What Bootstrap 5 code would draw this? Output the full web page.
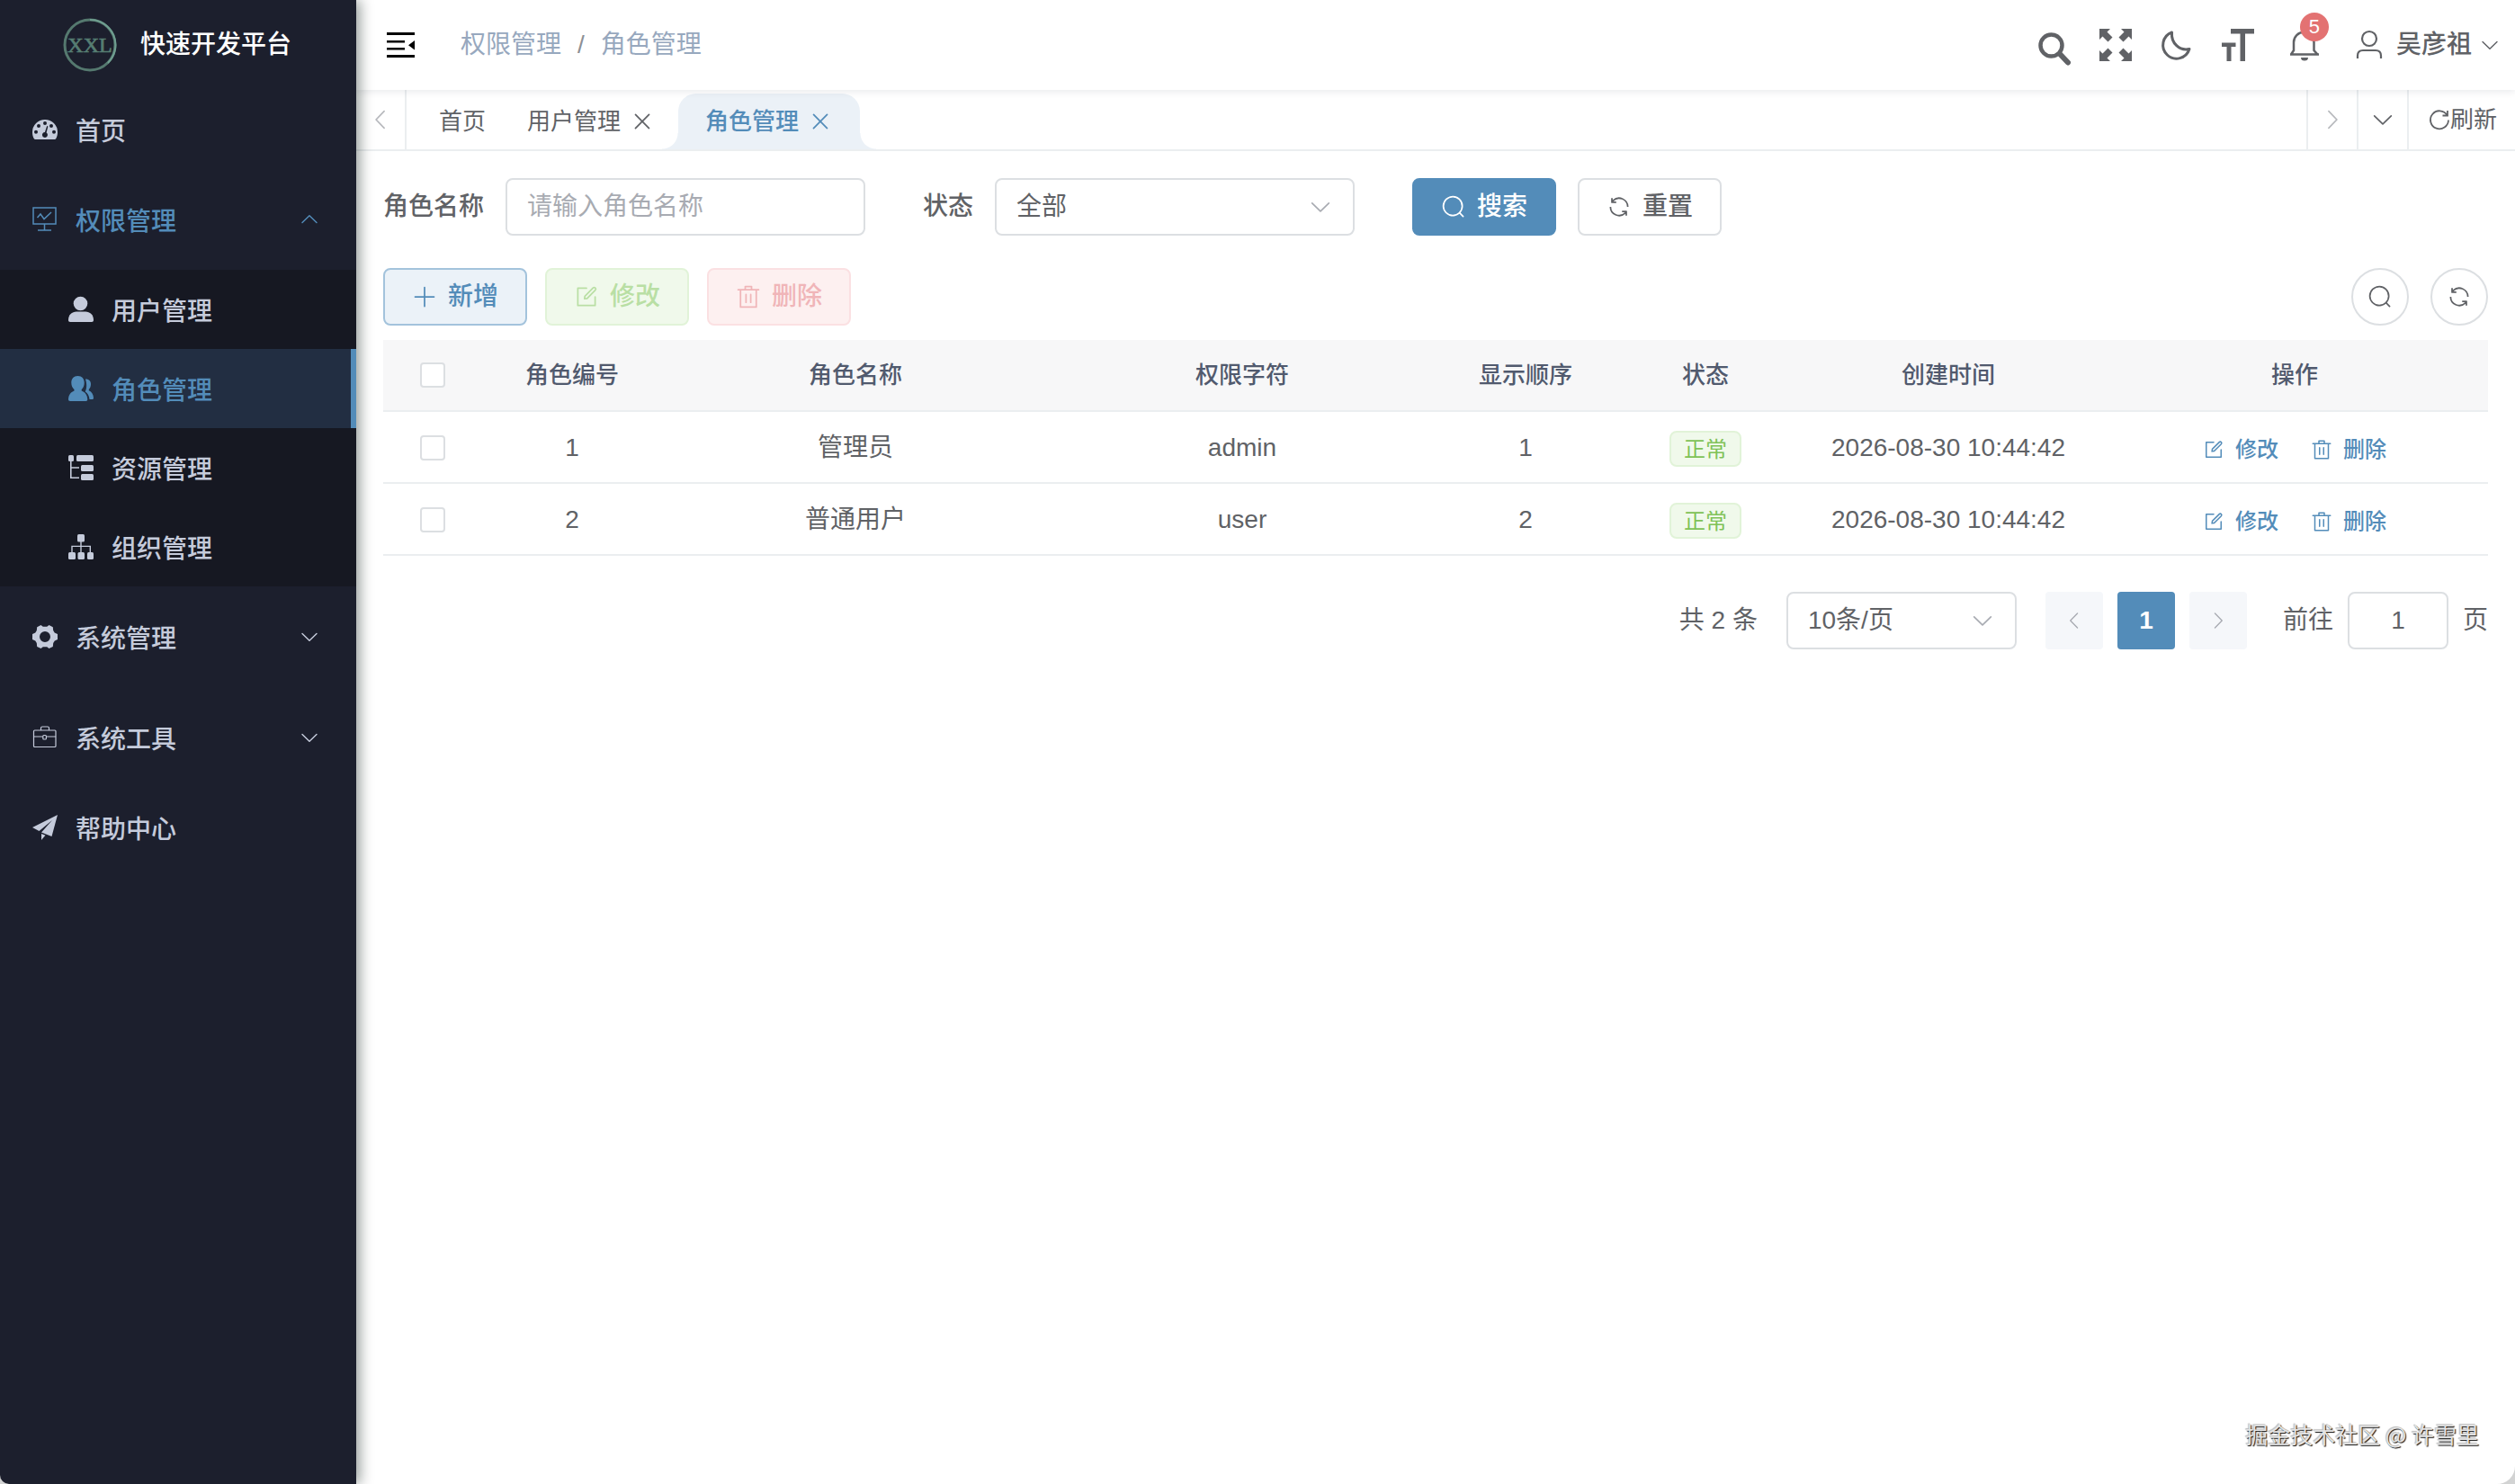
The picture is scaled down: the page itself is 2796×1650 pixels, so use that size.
<!DOCTYPE html>
<html lang="zh-CN">
<head>
<meta charset="utf-8">
<meta name="viewport" content="width=device-width, initial-scale=1">
<title>角色管理 - 快速开发平台</title>
<link rel="stylesheet" href="https://cdn.jsdelivr.net/npm/bootstrap@5.3.0/dist/css/bootstrap.min.css">
<style>
:root{--brand:#538cb9;--ink:#606266;--line:#ebeef0;--ctl:#dcdfe2}
body{font-family:"Liberation Sans","Noto Sans CJK SC",sans-serif;font-size:28px;line-height:40px;color:var(--ink);background:#d2d3d3}
a{text-decoration:none;color:inherit}
button{color:inherit}
.ico{width:28px;height:28px;fill:currentColor;flex:none;display:block;overflow:visible}
.ico.line{fill:none;stroke:currentColor}
.ico-sm{width:24px;height:24px}
.ico-lg{width:36px;height:36px}
.shell{min-height:100vh;background:#fff;border-radius:0 0 20px 10px;overflow:hidden;position:relative}
/* sidebar */
.side{width:396px;flex:none;background:#1c1f2d;color:#c5cbdb;font-weight:500;box-shadow:4px 0 14px rgba(0,20,15,.42);z-index:2}
.logo-row{height:100px;padding-left:70px;gap:26px;color:#fff}
.logo-row svg{width:60px;height:60px}
.menu-a{height:88px;padding:0 36px;gap:20px;font-family:"Noto Sans CJK SC",sans-serif}
.menu-a.tall{height:112px}
.menu-a.on{color:var(--brand)}
.menu-a .ico-sm{margin-left:auto;margin-right:4px}
.sub{background:#161822}
.sub .menu-a{padding-left:76px}
.sub .menu-a.on{background:#222e42;border-right:6px solid var(--brand)}
/* top bar */
.topbar{height:100px;padding:0 16px 0 34px;position:relative;z-index:1;box-shadow:0 2px 8px rgba(0,21,41,.09)}
.crumb{gap:18px;margin-left:46px;color:#97a8be}
.crumb i{font-style:normal;color:#8d9095}
.tools{gap:32px}
.tool{border:0;background:none;padding:0;display:block}
.bell{position:relative;margin-left:6px}
.bell b{position:absolute;left:13px;top:-18px;width:32px;height:32px;border-radius:16px;background:#e37272;color:#fff;font-size:22px;line-height:32px;font-weight:400;text-align:center}
.who{font-weight:500;gap:12px;margin-left:4px}
.who .ico-sm{margin-left:-4px}
/* tab bar */
.tabbar{height:68px;border-bottom:2px solid var(--line);font-size:26px}
.cellbtn{width:56px;border:0;background:none;padding:0;display:flex;align-items:center;justify-content:center;color:var(--ink)}
.cellbtn.dim{color:#b5b7bb}
.bl{border-left:2px solid var(--line)}
.br{border-right:2px solid var(--line)}
.tablist{padding-left:10px}
.tab-i{padding:0 26px;height:62px;margin-top:4px;gap:10px;position:relative}
.tab-i.home{margin-right:20px;padding-right:0}
.tab-i.on{padding:0 30px;background:#ebf1f7;color:var(--brand);font-weight:500;border-radius:20px 20px 0 0}
.tab-i.on::before,.tab-i.on::after{content:"";position:absolute;bottom:0;width:18px;height:18px}
.tab-i.on::before{left:-18px;background:radial-gradient(circle at 0 0,transparent 17px,#ebf1f7 18px)}
.tab-i.on::after{right:-18px;background:radial-gradient(circle at 100% 0,transparent 17px,#ebf1f7 18px)}
.reload{padding:0 20px 0 22px}
/* content */
.page{padding:30px 30px 0}
.lab{font-weight:500;padding-right:24px}
.gap-l{margin-left:64px}
.gap-s{margin-left:24px}
.ctl{height:64px;border:2px solid var(--ctl);border-radius:8px;background:#fff;color:var(--ink);padding:0 22px;font-size:28px;line-height:40px;width:100%;appearance:none;outline:0;display:block}
.ctl::placeholder{color:#a8abb2;opacity:1}
.pick{position:relative}
.pick .ico{position:absolute;right:24px;top:18px;color:#a8abb2;pointer-events:none}
.w-ctl{width:400px}
.w-size{width:256px}
.w-go{width:112px}
.b-el{height:64px;width:160px;padding:0;border:2px solid var(--ctl);border-radius:8px;display:flex;align-items:center;justify-content:center;gap:12px;font-size:28px;line-height:40px;font-weight:500;color:var(--ink);background:#fff}
.b-main{background:var(--brand);border-color:var(--brand);color:#fff}
.b-add{background:#ebf2f8;border-color:#a3c3dc;color:var(--brand)}
.b-edit{background:#f0f9eb;border-color:#e1f3d8;color:#b9dfa4}
.b-del{background:#fdf0f0;border-color:#fbe0e2;color:#f0b5b8}
.b-round{width:64px;border-radius:32px}
.acts{gap:20px;margin:36px 0 16px}
.grid-t{table-layout:fixed;width:100%;text-align:center;border-collapse:separate;border-spacing:0}
.grid-t th,.grid-t td{height:80px;padding:0;border-bottom:2px solid var(--line);vertical-align:middle}
.grid-t td{padding-top:2px}
.grid-t th{background:#f7f7f8;color:#515a6e;font-size:26px;font-weight:500}
.c-tick{width:110px}
.c-mid{width:200px}
.c-time{width:340px}
.tick{appearance:none;width:28px;height:28px;border:2px solid var(--ctl);border-radius:4px;background:#fff;display:block;margin:0 auto}
.state{display:block;width:80px;height:40px;line-height:38px;margin:2px auto 0;border:2px solid #e1f3d8;background:#f0f9eb;color:#7fc257;border-radius:8px;font-size:24px}
.ops{font-size:24px;color:var(--brand);font-weight:500;gap:36px;padding-top:4px}
.ops a{gap:12px}
.pager{gap:16px;margin-top:40px}
.pg{width:64px;height:64px;border:0;border-radius:4px;background:#f5f7fa;color:#a8abb2;display:flex;align-items:center;justify-content:center;padding:0}
.pg.on{background:var(--brand);color:#fff;font-weight:700}
.stamp{position:absolute;right:40px;bottom:36px;font-family:"Noto Sans CJK SC",sans-serif;font-size:25px;line-height:40px;color:#e4e4e4;text-shadow:1px 1px 1px #111,-1px -1px 1px #bbb}
</style>
</head>
<body>
<svg class="d-none" xmlns="http://www.w3.org/2000/svg">
<symbol id="down" viewBox="0 0 1024 1024"><path d="M831.872 340.864 512 652.672 192.128 340.864a30.592 30.592 0 0 0-42.752 0 29.12 29.12 0 0 0 0 41.6L489.664 714.24a32 32 0 0 0 44.672 0l340.288-331.712a29.12 29.12 0 0 0 0-41.728 30.592 30.592 0 0 0-42.752 0z"/></symbol>
<symbol id="up" viewBox="0 0 1024 1024"><path transform="rotate(180 512 512)" d="M831.872 340.864 512 652.672 192.128 340.864a30.592 30.592 0 0 0-42.752 0 29.12 29.12 0 0 0 0 41.6L489.664 714.24a32 32 0 0 0 44.672 0l340.288-331.712a29.12 29.12 0 0 0 0-41.728 30.592 30.592 0 0 0-42.752 0z"/></symbol>
<symbol id="left" viewBox="0 0 1024 1024"><path transform="rotate(90 512 512)" d="M831.872 340.864 512 652.672 192.128 340.864a30.592 30.592 0 0 0-42.752 0 29.12 29.12 0 0 0 0 41.6L489.664 714.24a32 32 0 0 0 44.672 0l340.288-331.712a29.12 29.12 0 0 0 0-41.728 30.592 30.592 0 0 0-42.752 0z"/></symbol>
<symbol id="right" viewBox="0 0 1024 1024"><path transform="rotate(-90 512 512)" d="M831.872 340.864 512 652.672 192.128 340.864a30.592 30.592 0 0 0-42.752 0 29.12 29.12 0 0 0 0 41.6L489.664 714.24a32 32 0 0 0 44.672 0l340.288-331.712a29.12 29.12 0 0 0 0-41.728 30.592 30.592 0 0 0-42.752 0z"/></symbol>
<symbol id="find" viewBox="0 0 1024 1024"><path d="m795.904 750.72 124.992 124.928a32 32 0 0 1-45.248 45.248L750.656 795.904a416 416 0 1 1 45.248-45.248zM480 832a352 352 0 1 0 0-704 352 352 0 0 0 0 704z"/></symbol>
<symbol id="sync" viewBox="0 0 1024 1024"><path d="M771.776 794.88A384 384 0 0 1 128 512h64a320 320 0 0 0 555.712 216.448H654.72a32 32 0 1 1 0-64h149.056a32 32 0 0 1 32 32v148.928a32 32 0 1 1-64 0v-50.56zM276.288 295.616h92.992a32 32 0 0 1 0 64H220.16a32 32 0 0 1-32-32V178.56a32 32 0 0 1 64 0v50.56A384 384 0 0 1 896.128 512h-64a320 320 0 0 0-555.776-216.384z"/></symbol>
<symbol id="plus" viewBox="0 0 1024 1024"><path d="M480 480V128a32 32 0 0 1 64 0v352h352a32 32 0 1 1 0 64H544v352a32 32 0 1 1-64 0V544H128a32 32 0 0 1 0-64h352z"/></symbol>
<symbol id="edit" viewBox="0 0 1024 1024"><path d="M832 512a32 32 0 1 1 64 0v352a32 32 0 0 1-32 32H160a32 32 0 0 1-32-32V160a32 32 0 0 1 32-32h352a32 32 0 0 1 0 64H192v640h640V512z"/><path d="m469.952 554.24 52.8-7.552L847.104 222.4a32 32 0 1 0-45.248-45.248L477.44 501.44l-7.552 52.8zm422.4-422.4a96 96 0 0 1 0 135.808l-331.84 331.84a32 32 0 0 1-18.112 9.088L436.8 623.68a32 32 0 0 1-36.224-36.224l15.104-105.6a32 32 0 0 1 9.024-18.112l331.904-331.84a96 96 0 0 1 135.744 0z"/></symbol>
<symbol id="bin" viewBox="0 0 1024 1024"><path d="M160 256H96a32 32 0 0 1 0-64h256V95.936a32 32 0 0 1 32-32h256a32 32 0 0 1 32 32V192h256a32 32 0 1 1 0 64h-64v672a32 32 0 0 1-32 32H192a32 32 0 0 1-32-32V256zm448-64v-64H416v64h192zM224 896h576V256H224v640zm192-128a32 32 0 0 1-32-32V416a32 32 0 0 1 64 0v320a32 32 0 0 1-32 32zm192 0a32 32 0 0 1-32-32V416a32 32 0 0 1 64 0v320a32 32 0 0 1-32 32z"/></symbol>
<symbol id="shut" viewBox="0 0 1024 1024"><path d="M764.288 214.592 512 466.88 259.712 214.592a31.936 31.936 0 0 0-45.12 45.12L466.752 512 214.528 764.224a31.936 31.936 0 1 0 45.12 45.184L512 557.184l252.288 252.288a31.936 31.936 0 0 0 45.12-45.12L557.12 512.064l252.288-252.352a31.936 31.936 0 1 0-45.12-45.184z"/></symbol>
</svg>
<div class="shell d-flex">
  <nav class="side" aria-label="主菜单">
    <div class="logo-row d-flex align-items-center">
      <svg viewBox="0 0 60 60" role="img" aria-label="XXL"><circle cx="30" cy="30" r="28" fill="none" stroke="#55796f" stroke-width="3"/><path d="M30 2a28 28 0 0 1 20 48" fill="none" stroke="#6f9e90" stroke-width="2"/><text x="30" y="38" text-anchor="middle" font-family="Liberation Serif" font-size="24" fill="#567d72" stroke="#567d72" stroke-width=".7">XXL</text></svg>
      <span>快速开发平台</span>
    </div>
    <a class="menu-a d-flex align-items-center" href="#"><svg class="ico" viewBox="0 0 28 28"><path fill-rule="evenodd" d="M14 3a14 14 0 0 0-14 14c0 2.600.5 5 1.800 7.300.3.500.8.700 1.400.700h21.600c.6 0 1.100-.2 1.400-.7C27.500 22 28 19.600 28 17A14 14 0 0 0 14 3zM4 14.800a2 2 0 1 1 0 4 2 2 0 0 1 0-4zM7 8a2 2 0 1 1 0 4 2 2 0 0 1 0-4zM14 5a2 2 0 1 1 0 4 2 2 0 0 1 0-4zM21 8a2 2 0 1 1 0 4 2 2 0 0 1 0-4zM24 14.800a2 2 0 1 1 0 4 2 2 0 0 1 0-4zM16.200 10l1.200.4-1.800 7a3 3 0 1 1-1.700-.5z"/></svg>首页</a>
    <a class="menu-a tall on d-flex align-items-center" href="#"><svg class="ico line" viewBox="0 0 28 28" stroke-width="1.500"><path d="M1 1h25v18H1zM13.500 19v7M6 26h15M5.500 12l3.500-4 4 5.500 8-7.500"/></svg>权限管理<svg class="ico ico-sm"><use href="#up"/></svg></a>
    <div class="sub">
      <a class="menu-a d-flex align-items-center" href="#"><svg class="ico" viewBox="0 0 28 28"><circle cx="13.500" cy="7.500" r="7.800"/><path d="M0 26c0-6 4-9.500 9-9.500h10c5 0 9 3.500 9 9.500 0 1.300-.8 2-2 2H2c-1.200 0-2-.7-2-2z"/></svg>用户管理</a>
      <a class="menu-a on d-flex align-items-center" href="#"><svg class="ico" viewBox="0 0 28 28"><path d="M10.500 0c4.500 0 7.200 3 7.200 7.500 0 3-1 5.700-3 7.500v1.500c4 1.500 6.300 4.500 6.600 9.500 0 1.300-.6 2-1.800 2H2c-1.300 0-2-.7-2-2 .3-5 2.500-8 6.500-9.500V15c-2.100-1.800-3.200-4.500-3.200-7.500C3.300 3 6 0 10.500 0z"/><path d="M19 3.500c4.500 0 6 2.500 6 5.500 0 2.500-.8 4.500-2.200 6v1.200c3.300 1.500 5 4.300 5.200 8.300 0 .8-.5 1.500-1.500 1.500h-3c-.5-4-1.800-6.500-4.800-8.500 1.600-3 2.200-8 .3-14z"/></svg>角色管理</a>
      <a class="menu-a d-flex align-items-center" href="#"><svg class="ico" viewBox="0 0 28 28"><rect width="6" height="7" rx="1.500"/><rect x="9" width="19" height="7" rx="1.500"/><rect x="14" y="11" width="14" height="7" rx="1.500"/><rect x="14" y="21" width="14" height="7" rx="1.500"/><path d="M2 6h1.600v7.200H12v1.600H3.600v9.600H12V26H2z"/></svg>资源管理</a>
      <a class="menu-a d-flex align-items-center" href="#"><svg class="ico" viewBox="0 0 28 28"><rect x="10" width="8" height="8.500" rx="1.500"/><rect y="20" width="8" height="8" rx="1.500"/><rect x="10.500" y="20" width="7.500" height="8" rx="1.500"/><rect x="21" y="20" width="7" height="8" rx="1.500"/><path d="M13.300 8h1.400v4.700H25V20h-1.400v-5.900h-8.900V20h-1.400v-5.900H4.700V20H3.300v-7.300h10z"/></svg>组织管理</a>
    </div>
    <a class="menu-a tall d-flex align-items-center" href="#"><svg class="ico" viewBox="0 0 28 28"><path fill-rule="evenodd" d="M9.500 1l2.300 1.700h4.400L18.500 1l4.300 2.300.4 3.700 1.500 2.500L28 11v6l-3.200 1.500-1.600 2.500-.4 4-4.300 2-2.300-1.700h-4.400L9.500 27l-4.300-2-.4-4-1.500-2.500L0 17v-6l3.300-1.500L4.800 7l.4-3.700zM14 8a6 6 0 1 0 0 12 6 6 0 0 0 0-12z"/></svg>系统管理<svg class="ico ico-sm"><use href="#down"/></svg></a>
    <a class="menu-a tall d-flex align-items-center" href="#"><svg class="ico line" viewBox="0 0 28 28" stroke-width="1.200"><rect x="1.500" y="6" width="24.500" height="18.500" rx="1"/><path d="M9.500 6V3.500q0-1.500 1.500-1.500h6q1.500 0 1.500 1.500V6M1.500 13h10M15.500 13H26"/><rect x="11.800" y="11.500" width="3.600" height="4.500" rx="1"/></svg>系统工具<svg class="ico ico-sm"><use href="#down"/></svg></a>
    <a class="menu-a d-flex align-items-center" href="#"><svg class="ico" viewBox="0 0 28 28"><path d="M28 0 0 14l7.500 4L22 6 10 19.500 21.500 24zM10 21v7l4.500-5.300z"/></svg>帮助中心</a>
  </nav>
  <div class="flex-grow-1 d-flex flex-column">
    <header class="topbar d-flex align-items-center">
      <button class="tool text-black" aria-label="折叠菜单"><svg class="ico ico-lg" viewBox="0 0 36 36"><path d="M0 4h31v3H0zM0 13h20v2.500H0zM0 21h20v2.500H0zM0 29h31v3H0zM31 13v10.500l-7-5.200z"/></svg></button>
      <div class="crumb d-flex"><a href="#">权限管理</a><i>/</i><span>角色管理</span></div>
      <div class="tools d-flex align-items-center ms-auto">
        <button class="tool" aria-label="搜索"><svg class="ico ico-lg line" viewBox="0 0 36 36" stroke-width="4.500"><circle cx="14.500" cy="18.500" r="12"/><path d="M24 28l9 9.500" stroke-linecap="round" stroke-width="6"/></svg></button>
        <button class="tool" aria-label="全屏"><svg class="ico ico-lg" viewBox="0 0 36 36"><path id="fs" d="M0 0h12L8.500 3.500l6 6-5 5-6-6L0 12z"/><use href="#fs" transform="matrix(-1 0 0 1 36 0)"/><use href="#fs" transform="matrix(1 0 0 -1 0 36)"/><use href="#fs" transform="matrix(-1 0 0 -1 36 36)"/></svg></button>
        <button class="tool" aria-label="深色模式"><svg class="ico ico-lg line" viewBox="0 0 36 36" stroke-width="3"><path d="M12.500 4A15 15 0 1 0 32 22.500C21 25 11.500 16 12.500 4z" stroke-linejoin="round"/></svg></button>
        <button class="tool" aria-label="字号"><svg class="ico ico-lg" viewBox="0 0 36 36"><path d="M10 0h26v5.500H26V36h-5.500V5.500H10zM0 15.500h15.500V20h-5v16h-5V20H0z"/></svg></button>
        <button class="tool bell" aria-label="通知"><svg class="ico ico-lg line" viewBox="0 0 36 36" stroke-width="2.500"><path d="M2 28.500h32M3 28.500l3-4.500V15a11 11 0 0 1 22.500 0v9l4 4.500"/><path d="M14 32h8a4 3.500 0 0 1-8 0z" fill="currentColor" stroke="none"/></svg><b>5</b></button>
        <a href="#" class="who d-flex align-items-center"><svg class="ico ico-lg line" viewBox="0 0 36 36" stroke-width="2.200"><circle cx="18" cy="11" r="8"/><path d="M5 33v-3q0-6 6-6h14q6 0 6 6v3"/></svg>吴彦祖<svg class="ico ico-sm"><use href="#down"/></svg></a>
      </div>
    </header>
    <div class="tabbar d-flex">
      <button class="cellbtn dim br" aria-label="向左"><svg class="ico"><use href="#left"/></svg></button>
      <div class="tablist d-flex">
        <a class="tab-i home d-flex align-items-center" href="#">首页</a>
        <a class="tab-i d-flex align-items-center" href="#">用户管理<svg class="ico"><use href="#shut"/></svg></a>
        <a class="tab-i on d-flex align-items-center" href="#">角色管理<svg class="ico"><use href="#shut"/></svg></a>
      </div>
      <div class="d-flex ms-auto">
        <button class="cellbtn dim bl" aria-label="向右"><svg class="ico"><use href="#right"/></svg></button>
        <button class="cellbtn bl" aria-label="更多"><svg class="ico"><use href="#down"/></svg></button>
        <a class="reload bl d-flex align-items-center" href="#"><svg class="ico line ico-sm" viewBox="0 0 24 24" stroke-width="1.800"><path d="M20.500 7A10 10 0 1 0 22 12.500M21 2v5.500h-5.500"/></svg>刷新</a>
      </div>
    </div>
    <main class="page">
      <form class="d-flex align-items-center">
        <label class="lab" for="rn">角色名称</label><div class="w-ctl"><input id="rn" class="ctl" placeholder="请输入角色名称"></div>
        <label class="lab gap-l" for="st">状态</label>
        <div class="pick w-ctl"><select id="st" class="ctl"><option>全部</option></select><svg class="ico"><use href="#down"/></svg></div>
        <button type="button" class="b-el b-main gap-l"><svg class="ico"><use href="#find"/></svg>搜索</button>
        <button type="button" class="b-el gap-s"><svg class="ico"><use href="#sync"/></svg>重置</button>
      </form>
      <div class="acts d-flex">
        <button class="b-el b-add"><svg class="ico"><use href="#plus"/></svg>新增</button>
        <button class="b-el b-edit" disabled><svg class="ico"><use href="#edit"/></svg>修改</button>
        <button class="b-el b-del" disabled><svg class="ico"><use href="#bin"/></svg>删除</button>
        <button class="b-el b-round ms-auto" aria-label="显示搜索"><svg class="ico"><use href="#find"/></svg></button>
        <button class="b-el b-round ms-1" aria-label="刷新列表"><svg class="ico"><use href="#sync"/></svg></button>
      </div>
      <table class="grid-t">
        <colgroup><col class="c-tick"><col class="c-mid"><col><col><col class="c-mid"><col class="c-mid"><col class="c-time"><col></colgroup>
        <thead><tr><th><input type="checkbox" class="tick" aria-label="全选"></th><th>角色编号</th><th>角色名称</th><th>权限字符</th><th>显示顺序</th><th>状态</th><th>创建时间</th><th>操作</th></tr></thead>
        <tbody>
          <tr><td><input type="checkbox" class="tick" aria-label="选择管理员"></td><td>1</td><td>管理员</td><td>admin</td><td>1</td><td><span class="state">正常</span></td><td>2026-08-30 10:44:42</td><td><div class="ops d-flex justify-content-center"><a class="d-flex align-items-center" href="#"><svg class="ico ico-sm"><use href="#edit"/></svg>修改</a><a class="d-flex align-items-center" href="#"><svg class="ico ico-sm"><use href="#bin"/></svg>删除</a></div></td></tr>
          <tr><td><input type="checkbox" class="tick" aria-label="选择普通用户"></td><td>2</td><td>普通用户</td><td>user</td><td>2</td><td><span class="state">正常</span></td><td>2026-08-30 10:44:42</td><td><div class="ops d-flex justify-content-center"><a class="d-flex align-items-center" href="#"><svg class="ico ico-sm"><use href="#edit"/></svg>修改</a><a class="d-flex align-items-center" href="#"><svg class="ico ico-sm"><use href="#bin"/></svg>删除</a></div></td></tr>
        </tbody>
      </table>
      <div class="pager d-flex align-items-center justify-content-end">
        <span class="me-3">共 2 条</span>
        <div class="pick w-size me-3"><select class="ctl" aria-label="每页条数"><option>10条/页</option></select><svg class="ico"><use href="#down"/></svg></div>
        <button class="pg" aria-label="上一页"><svg class="ico ico-sm"><use href="#left"/></svg></button>
        <button class="pg on">1</button>
        <button class="pg" aria-label="下一页"><svg class="ico ico-sm"><use href="#right"/></svg></button>
        <label class="ms-4" for="go">前往</label><div class="w-go"><input id="go" class="ctl text-center" value="1"></div><span>页</span>
      </div>
    </main>
  </div>
  <div class="stamp">掘金技术社区 @ 许雪里</div>
</div>
<script src="https://cdn.jsdelivr.net/npm/bootstrap@5.3.0/dist/js/bootstrap.bundle.min.js"></script>
</body>
</html>
